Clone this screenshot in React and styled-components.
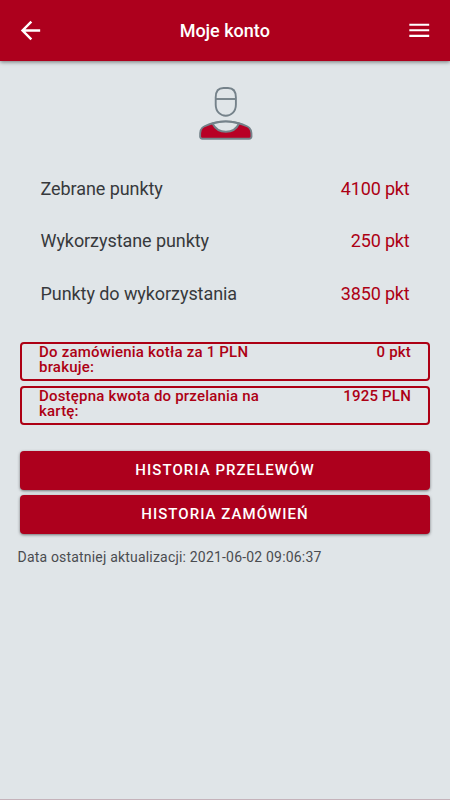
import React from 'react'
import styled, { createGlobalStyle } from 'styled-components';

const GlobalStyle = createGlobalStyle`
    body {
        margin: 0;
        background: #e0e5e8;
        font-family: Roboto, "Noto Sans", sans-serif;
    }
`;

const Screen = styled.div`
    box-sizing: border-box;
    height: 800px;
    background: #e0e5e8;
    border-bottom: 1px solid #c5b2ba;
    overflow: hidden;
`;

const Header = styled.header`
    display: flex;
    align-items: center;
    justify-content: space-between;
    box-sizing: border-box;
    height: 61px;
    padding: 0 17.5px 0 15.5px;
    background: #ad001d;
    box-shadow: 0 1px 4px rgba(0, 0, 0, 0.5);
`;

const Title = styled.h1`
    margin: 0 1px 0 0;
    color: #fff;
    font-size: 18px;
    font-weight: 500;
    line-height: 24px;
`;

const IconButton = styled.button`
    display: flex;
    padding: 0;
    border: 0;
    background: none;
    color: #fff;
`;

const Avatar = styled.div`
    display: flex;
    justify-content: center;
    padding-top: 24px;
    height: 58px;
`;

const Points = styled.div`
    padding: 19.2px 40.5px 0;
`;

const Row = styled.div`
    display: flex;
    align-items: center;
    justify-content: space-between;
    height: 52.5px;
    color: #37393c;
    font-size: 18px;
    letter-spacing: -0.07px;
`;

const Value = styled.span`
    color: #ad0014;
    letter-spacing: -0.17px;
`;

const Boxes = styled.div`
    display: flex;
    flex-direction: column;
    gap: 5px;
    padding: 22px 20px 0;
`;

const Box = styled.div`
    display: flex;
    justify-content: space-between;
    box-sizing: border-box;
    height: 39px;
    padding: 1px 17px;
    border: 2px solid #ad0014;
    border-radius: 4px;
    color: #ad0014;
    font-size: 15px;
    font-weight: 500;
    letter-spacing: 0.2px;
    line-height: 15.5px;
`;

const BoxLabel = styled.span`
    width: 240px;
`;

const Buttons = styled.div`
    display: flex;
    flex-direction: column;
    gap: 5px;
    padding: 26px 20px 0;
`;

const Button = styled.button`
    height: 39px;
    padding: 0;
    border: 0;
    border-radius: 4px;
    background: #ad001d;
    box-shadow: 0 1px 3px rgba(0, 0, 0, 0.5);
    color: #fff;
    font-family: inherit;
    font-size: 15px;
    font-weight: 500;
    letter-spacing: 1.04px;
    text-transform: uppercase;
`;

const Updated = styled.p`
    margin: 14px 0 0 17.5px;
    color: #4a4c50;
    font-size: 14px;
    letter-spacing: 0.19px;
    line-height: 18px;
`;

const BackIcon = () => (
    <svg width="29" height="29" viewBox="0 0 24 24" fill="currentColor">
        <path d="M20 11H7.83l5.59-5.59L12 4l-8 8 8 8 1.41-1.41L7.83 13H20v-2z" />
    </svg>
)

const MenuIcon = () => (
    <svg width="26.5" height="26.5" viewBox="0 0 24 24" fill="currentColor">
        <path d="M3 18h18v-2H3v2zm0-5h18v-2H3v2zm0-7v2h18V6H3z" />
    </svg>
)

const UserIcon = () => (
    <svg width="56" height="56" viewBox="0 0 56 56" fill="none" stroke="#75828a" strokeWidth="1.9">
        <path d="M18.700 12.500Q18.700 3 26.500 3H31Q38.900 3 38.900 12.500V19.500C38.900 34.500 18.700 34.500 18.700 19.500Z" />
        <path d="M18.700 14H38.900" />
        <path fill="#b80025" d="M7 41.500Q28.700 31.500 50.500 41.500C54 43 54.700 46.500 54.500 51.500Q54.400 53.700 52 53.700H5.500Q3.200 53.700 3.100 51.500C2.900 46.500 3.500 43 7 41.500Z" />
        <path fill="#e0e5e8" d="M15.500 38.500Q28.700 34.500 42 38.500C37 49.500 21 49.500 15.500 38.500Z" />
    </svg>
)

const points = [
    { label: 'Zebrane punkty', value: '4100 pkt' },
    { label: 'Wykorzystane punkty', value: '250 pkt' },
    { label: 'Punkty do wykorzystania', value: '3850 pkt' },
]

const balances = [
    { label: 'Do zamówienia kotła za 1 PLN brakuje:', value: '0 pkt' },
    { label: 'Dostępna kwota do przelania na kartę:', value: '1925 PLN' },
]

export default function App() {
    return (
        <Screen>
            <GlobalStyle />
            <Header>
                <IconButton aria-label="Wstecz"><BackIcon /></IconButton>
                <Title>Moje konto</Title>
                <IconButton aria-label="Menu"><MenuIcon /></IconButton>
            </Header>
            <Avatar><UserIcon /></Avatar>
            <Points>
                {points.map(({ label, value }) => (
                    <Row key={label}>
                        <span>{label}</span>
                        <Value>{value}</Value>
                    </Row>
                ))}
            </Points>
            <Boxes>
                {balances.map(({ label, value }) => (
                    <Box key={label}>
                        <BoxLabel>{label}</BoxLabel>
                        <span>{value}</span>
                    </Box>
                ))}
            </Boxes>
            <Buttons>
                <Button>Historia przelewów</Button>
                <Button>Historia zamówień</Button>
            </Buttons>
            <Updated>Data ostatniej aktualizacji: 2021-06-02 09:06:37</Updated>
        </Screen>
    )
}
